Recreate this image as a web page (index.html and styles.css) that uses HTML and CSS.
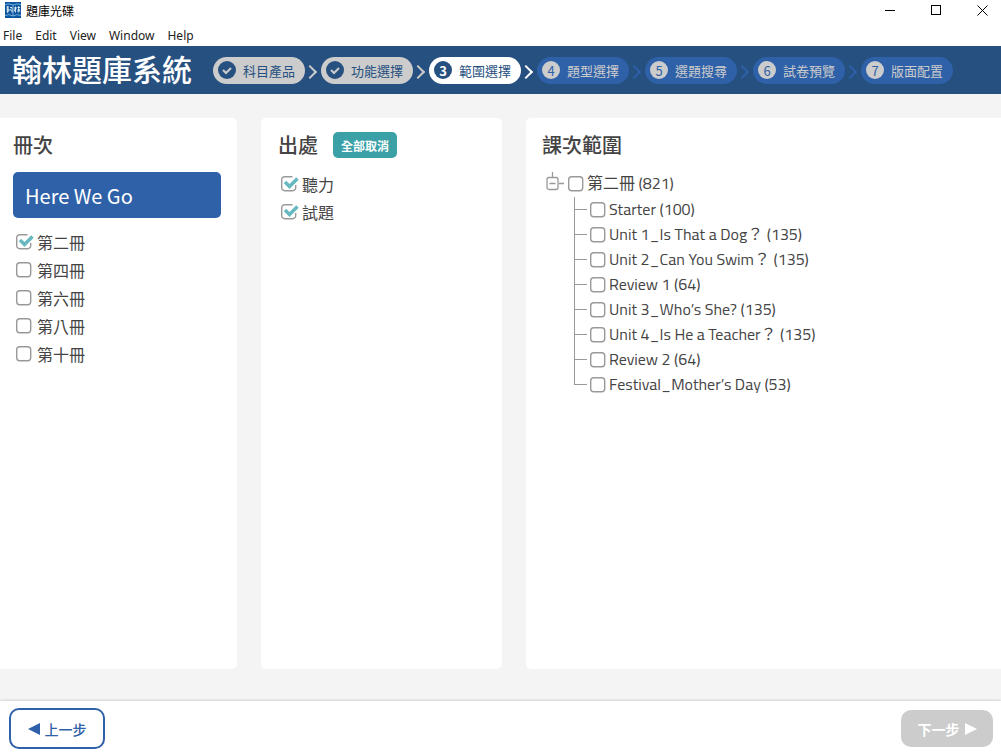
FILE: index.html
```html
<!DOCTYPE html>
<html lang="zh-Hant">
  <head>
    <meta charset="UTF-8" />
    <meta name="viewport" content="width=device-width, initial-scale=1.0" />
    <title>題庫光碟</title>
    <link rel="stylesheet" href="styles.css">
  </head>
  <body>
    <div class="titlebar">
      <svg class="app-icon" width="16" height="16" viewBox="0 0 16 16">
        <rect width="16" height="16" fill="#0b559f" />
        <path d="M0 2.5Q4 1 8 3Q12 1 16 2.5M0 13.5Q4 11.5 8 14Q12 11.5 16 13.5M8 3v11" fill="none" stroke="#8fc1e8" stroke-width="0.8" />
        <path d="M1.5 5h2.5M2.7 4v7M1.5 7h2.5v2h-2.5M5 5.5h2v5M5 7.5l1.5 1M9 6h3M10.5 4.5v6M10 7l-1 2.5M12.5 5.5h2.5M13.7 4v6.5M13.5 7l-1 2.5M14 7l1 2.5" fill="none" stroke="#fff" stroke-width="0.8" />
      </svg>
      <span class="app-name">題庫光碟</span>
      <div class="window-buttons">
        <button aria-label="Minimize">
          <svg width="11" height="11" viewBox="0 0 11 11"><path d="M0 5.5h10" /></svg>
        </button>
        <button aria-label="Maximize">
          <svg width="11" height="11" viewBox="0 0 11 11"><rect x="0.5" y="0.5" width="9" height="9" /></svg>
        </button>
        <button aria-label="Close">
          <svg width="11" height="11" viewBox="0 0 11 11"><path d="M0.5 0.5l10 10M10.5 0.5l-10 10" /></svg>
        </button>
      </div>
    </div>

    <nav class="menubar">
      <button>File</button>
      <button>Edit</button>
      <button>View</button>
      <button>Window</button>
      <button>Help</button>
    </nav>

    <header class="header">
      <h1>翰林題庫系統</h1>
      <ol class="steps">
        <li class="step done">
          <span class="num"><svg width="18" height="18" viewBox="0 0 18 18"><path d="M5 9l3 3 5-5" /></svg></span>
          科目產品
        </li>
        <li class="step done">
          <span class="num"><svg width="18" height="18" viewBox="0 0 18 18"><path d="M5 9l3 3 5-5" /></svg></span>
          功能選擇
        </li>
        <li class="step current"><span class="num">3</span>範圍選擇</li>
        <li class="step"><span class="num">4</span>題型選擇</li>
        <li class="step"><span class="num">5</span>選題搜尋</li>
        <li class="step"><span class="num">6</span>試卷預覽</li>
        <li class="step"><span class="num">7</span>版面配置</li>
      </ol>
    </header>

    <main class="content">
      <section class="card books">
        <h2>冊次</h2>
        <button class="series-btn">Here We Go</button>
        <div class="check-list">
          <label><input type="checkbox" checked />第二冊</label>
          <label><input type="checkbox" />第四冊</label>
          <label><input type="checkbox" />第六冊</label>
          <label><input type="checkbox" />第八冊</label>
          <label><input type="checkbox" />第十冊</label>
        </div>
      </section>

      <section class="card sources">
        <div class="card-title">
          <h2>出處</h2>
          <button class="cancel-btn">全部取消</button>
        </div>
        <div class="check-list">
          <label><input type="checkbox" checked />聽力</label>
          <label><input type="checkbox" checked />試題</label>
        </div>
      </section>

      <section class="card lessons">
        <h2>課次範圍</h2>
        <div class="tree">
          <div class="tree-root">
            <button class="toggle" aria-label="收合">
              <svg width="18" height="20" viewBox="0 0 18 20">
                <path d="M6.5 0v5M13 11.5h5M3.5 11.5h6" />
                <rect x="1" y="5.5" width="11" height="12" rx="2" />
              </svg>
            </button>
            <label><input type="checkbox" />第二冊 (821)</label>
          </div>
          <ul>
            <li><label><input type="checkbox" />Starter (100)</label></li>
            <li><label><input type="checkbox" />Unit 1_Is That a Dog？ (135)</label></li>
            <li><label><input type="checkbox" />Unit 2_Can You Swim？ (135)</label></li>
            <li><label><input type="checkbox" />Review 1 (64)</label></li>
            <li><label><input type="checkbox" />Unit 3_Who’s She? (135)</label></li>
            <li><label><input type="checkbox" />Unit 4_Is He a Teacher？ (135)</label></li>
            <li><label><input type="checkbox" />Review 2 (64)</label></li>
            <li><label><input type="checkbox" />Festival_Mother’s Day (53)</label></li>
          </ul>
        </div>
      </section>
    </main>

    <footer class="footer">
      <button class="prev-btn">
        <svg width="12" height="12" viewBox="0 0 12 12"><path d="M12 0v12L0 6z" /></svg>
        上一步
      </button>
      <button class="next-btn" disabled>
        下一步
        <svg width="12" height="12" viewBox="0 0 12 12"><path d="M0 0v12L12 6z" /></svg>
      </button>
    </footer>
  </body>
</html>
```
FILE: styles.css
```css
:root {
  --navy: #265080;
  --blue: #2f61a8;
  --teal: #3ba1a7;
  --gray: #ccc;
  --page-bg: #f4f4f4;
  --text-color: #444;
  --cjk: "Noto Sans CJK TC", sans-serif;
}

* {
  margin: 0;
  padding: 0;
  box-sizing: border-box;
}

body {
  min-height: 100vh;
  display: flex;
  flex-direction: column;
  font-family: var(--cjk);
  font-size: 16px;
  color: var(--text-color);
  background-color: var(--page-bg);
}

button {
  border: none;
  background: none;
  font-family: inherit;
  cursor: pointer;
}

svg {
  display: block;
  flex-shrink: 0;
}

ol,
ul {
  list-style: none;
}

h2 {
  font-size: 20px;
  font-weight: 500;
  line-height: 28px;
}

/* Window frame */
.titlebar {
  display: flex;
  align-items: center;
  height: 20px;
  padding-left: 5px;
  background-color: #fff;
}

.app-name {
  margin-left: 5px;
  font-size: 12px;
  color: #000;
}

.window-buttons {
  display: flex;
  margin-left: auto;
}

.window-buttons button {
  display: flex;
  align-items: center;
  justify-content: flex-end;
  width: 46px;
  height: 20px;
  padding-right: 13px;
}

.window-buttons svg {
  fill: none;
  stroke: #000;
}

.menubar {
  display: flex;
  gap: 13px;
  height: 26px;
  padding: 0 3px;
  background-color: #fff;
}

.menubar button {
  font-family: "Noto Sans", sans-serif;
  font-size: 12px;
  line-height: 32px;
  color: #222;
}

/* Header and steps */
.header {
  display: flex;
  align-items: center;
  gap: 21px;
  height: 48px;
  padding-left: 12px;
  background-color: var(--navy);
}

.header h1 {
  font-size: 30px;
  font-weight: 500;
  line-height: 44px;
  height: 48px;
  color: #fff;
  white-space: nowrap;
}

.steps {
  display: flex;
  gap: 16px;
}

.step {
  position: relative;
  display: flex;
  align-items: center;
  gap: 7px;
  height: 27px;
  padding: 0 10px 0 5px;
  border-radius: 14px;
  font-size: 13px;
  white-space: nowrap;
  color: var(--gray);
  background-color: var(--blue);
}

.step:not(:last-child)::after {
  content: "";
  position: absolute;
  top: 10px;
  right: -10px;
  width: 8px;
  height: 8px;
  border: solid var(--blue);
  border-width: 2px 2px 0 0;
  transform: rotate(45deg);
}

.num {
  display: flex;
  align-items: center;
  justify-content: center;
  width: 18px;
  height: 18px;
  border-radius: 50%;
  color: var(--blue);
  background-color: var(--gray);
}

.num svg {
  fill: none;
  stroke: var(--gray);
  stroke-width: 2;
}

.step.done {
  color: var(--navy);
  background-color: var(--gray);
}

.step.current {
  color: var(--navy);
  background-color: #fff;
}

.step.done .num,
.step.current .num {
  color: #fff;
  font-weight: bold;
  background-color: var(--navy);
}

.step.done:not(:last-child)::after {
  border-color: var(--gray);
}

.step.current:not(:last-child)::after {
  border-color: #fff;
}

/* Cards */
.content {
  flex: 1;
  display: grid;
  grid-template-columns: 237fr 241fr 475fr;
  gap: 24px;
  padding: 24px 0 32px;
}

.card {
  padding: 13px 16px;
  border-radius: 5px;
  background-color: #fff;
}

.books {
  padding-left: 13px;
  border-radius: 0 5px 5px 0;
}

.sources {
  padding-left: 17px;
}

.lessons {
  border-radius: 5px 0 0 5px;
}

.card-title {
  display: flex;
  align-items: center;
  gap: 15px;
}

.cancel-btn {
  height: 26px;
  padding: 0 8px;
  border-radius: 5px;
  font-size: 12px;
  font-weight: bold;
  color: #fff;
  background-color: var(--teal);
}

.series-btn {
  width: 100%;
  height: 46px;
  margin-top: 13px;
  padding: 0 12px;
  border-radius: 5px;
  font-size: 20px;
  text-align: left;
  color: #fff;
  background-color: var(--blue);
}

.check-list {
  display: flex;
  flex-direction: column;
  align-items: flex-start;
  margin-top: 10px;
  padding-left: 2px;
}

.card-title + .check-list {
  margin-top: 11px;
}

.check-list label {
  display: flex;
  align-items: center;
  gap: 3px;
  line-height: 28px;
}

input[type="checkbox"] {
  appearance: none;
  flex-shrink: 0;
  width: 19px;
  height: 18px;
  background: url("data:image/svg+xml,%3Csvg xmlns='http://www.w3.org/2000/svg' width='19' height='18'%3E%3Crect x='1.7' y='1.7' width='14' height='14' rx='3' fill='none' stroke='%23999' stroke-width='1.4'/%3E%3C/svg%3E") no-repeat;
}

input[type="checkbox"]:checked {
  background-image: url("data:image/svg+xml,%3Csvg xmlns='http://www.w3.org/2000/svg' width='19' height='18'%3E%3Cpath d='M12.5 1.7H4.7a3 3 0 0 0-3 3v8a3 3 0 0 0 3 3h8a3 3 0 0 0 3-3V10' fill='none' stroke='%23999' stroke-width='1.4'/%3E%3Cpath d='M5 7l4.500 4.500L17.500 3.500' fill='none' stroke='%2367b9c1' stroke-width='3.5'/%3E%3C/svg%3E");
}

/* Lesson tree */
.tree {
  margin-top: 11px;
  padding-left: 4px;
  font-family: "Titillium Web", Roboto, var(--cjk);
}

.tree-root {
  display: flex;
  align-items: center;
  height: 27px;
}

.toggle svg {
  margin: 0 3px 4px 0;
  fill: none;
  stroke: #999;
  stroke-width: 1.3;
}

.tree label {
  display: flex;
  align-items: center;
  gap: 1px;
  line-height: 25px;
  white-space: nowrap;
}

.tree ul {
  padding-left: 28px;
}

.tree li {
  position: relative;
  padding-left: 15px;
}

.tree li::before {
  content: "";
  position: absolute;
  left: 0;
  bottom: 12px;
  width: 12px;
  height: 25px;
  border: solid #999;
  border-width: 0 0 1px 1px;
}

.tree li:first-child::before {
  height: 12px;
}

/* Footer */
.footer {
  display: flex;
  align-items: center;
  justify-content: space-between;
  height: 52px;
  padding: 3px 8px 0 9px;
  background-color: #fff;
  box-shadow: 0 0 3px rgba(0, 0, 0, 0.25);
}

.footer button {
  display: flex;
  align-items: center;
  justify-content: center;
  gap: 5px;
  border-radius: 10px;
  font-size: 14px;
}

.footer svg {
  fill: currentColor;
}

.prev-btn {
  width: 96px;
  height: 41px;
  border: 2px solid var(--blue);
  font-weight: 500;
  color: var(--blue);
}

.next-btn {
  width: 92px;
  height: 37px;
  font-weight: bold;
  color: #fff;
  background-color: var(--gray);
}
```
